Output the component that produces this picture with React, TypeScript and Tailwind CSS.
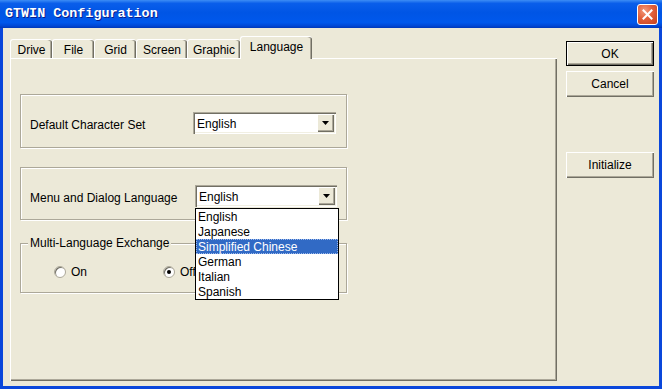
import { useState } from "react";

const raised =
  "shadow-[inset_1px_1px_0_#fff,inset_-1px_-1px_0_#716f64,inset_-2px_-2px_0_#aca899]";
const etched =
  "border border-[#aca899] shadow-[inset_1px_1px_0_#fff,1px_1px_0_#fff]";

const tabs = [
  { name: "Drive", w: "w-[42px]" },
  { name: "File", w: "w-[42px]" },
  { name: "Grid", w: "w-[42px]" },
  { name: "Screen", w: "w-[51px]" },
  { name: "Graphic", w: "w-[53px]" },
  { name: "Language", w: "w-[72px]" },
];

const languages = [
  "English",
  "Japanese",
  "Simplified Chinese",
  "German",
  "Italian",
  "Spanish",
];

const Combo = ({ value, width }: { value: string; width: string }) => (
  <div
    className={`flex h-[22px] bg-white p-[2px] shadow-[inset_1px_1px_0_#aca899,inset_2px_2px_0_#716f64,inset_-1px_-1px_0_#fff,inset_-2px_-2px_0_#f1efe2] ${width}`}
  >
    <span className="flex-1 pl-[2px] pt-[1px] leading-[18px] text-black">{value}</span>
    <span
      className={`flex h-[18px] w-[17px] items-center justify-center bg-[#ECE9D8] ${raised}`}
    >
      <svg width="7" height="4" viewBox="0 0 7 4">
        <path d="M0 0h7L3.5 4z" fill="#000" />
      </svg>
    </span>
  </div>
);

const Radio = ({ label, checked }: { label: string; checked?: boolean }) => (
  <div className="flex items-center gap-[5px]">
    <span className="flex h-[12px] w-[12px] items-center justify-center rounded-full border border-[#aca899] bg-white shadow-[inset_1px_1px_0_#716f64]">
      {checked && <span className="h-[4px] w-[4px] rounded-full bg-black" />}
    </span>
    <span className="leading-[14px]">{label}</span>
  </div>
);

const XpButton = ({
  label,
  isDefault,
  className,
}: {
  label: string;
  isDefault?: boolean;
  className: string;
}) => (
  <button
    type="button"
    className={`flex w-[88px] items-center justify-center bg-[#ECE9D8] text-[12px] text-black ${
      isDefault ? "border border-black" : ""
    } ${className}`}
  >
    <span className={`flex h-full w-full items-center justify-center ${raised}`}>
      {label}
    </span>
  </button>
);

const App = () => {
  const [active] = useState("Language");

  return (
    <div className="flex h-[389px] w-[662px] flex-col bg-[#0A47DB] font-['Liberation_Sans',Arial,sans-serif] text-[12px] text-black">
      {/* title bar */}
      <div className="flex h-[28px] shrink-0 items-center bg-[linear-gradient(180deg,#3D8DF5_0%,#0A5EEA_12%,#0055E5_45%,#0058EC_80%,#0048D6_92%,#0037B8_100%)] pl-[5px] pr-[4px]">
        <span className="font-['Liberation_Mono',monospace] text-[13.4px] font-bold text-white [text-shadow:1px_1px_0_#0A1E8C]">
          GTWIN Configuration
        </span>
        <button
          type="button"
          className="ml-auto flex h-[21px] w-[21px] items-center justify-center rounded-[3px] border border-white bg-[radial-gradient(circle_at_35%_30%,#F29A7C_0%,#E2603B_45%,#C4401C_100%)]"
        >
          <svg width="11" height="11" viewBox="0 0 11 11">
            <path
              d="M1.5 1.5l8 8M9.5 1.5l-8 8"
              stroke="#fff"
              strokeWidth="2"
              strokeLinecap="square"
            />
          </svg>
        </button>
      </div>

      {/* body */}
      <div className="mx-[3px] mb-[3px] flex flex-1 bg-[#ECE9D8] pb-[5px] pl-[7px] pr-[5px] pt-[8px]">
        <div className="flex w-[547px] flex-col">
          <div className="flex h-[22px] items-end">
            {tabs.map((t) =>
              t.name === active ? (
                <div
                  key={t.name}
                  className={`relative z-10 -mb-px flex h-[23px] items-center justify-center rounded-t-[3px] border-l border-t border-white bg-[#ECE9D8] pb-[3px] shadow-[inset_-1px_0_0_#716f64,inset_-2px_0_0_#aca899] ${t.w}`}
                >
                  {t.name}
                </div>
              ) : (
                <div
                  key={t.name}
                  className={`flex h-[19px] items-center justify-center rounded-t-[3px] border-l border-t border-white pt-[1px] shadow-[inset_-1px_0_0_#716f64,inset_-2px_0_0_#aca899] ${t.w}`}
                >
                  {t.name}
                </div>
              )
            )}
          </div>

          <div className="flex flex-1 flex-col border-l border-t border-white pl-[9px] pt-[35px] shadow-[inset_-1px_-1px_0_#716f64,inset_-2px_-2px_0_#aca899]">
            <div className={`flex h-[54px] w-[327px] items-center pl-[9px] pt-[4px] ${etched}`}>
              <span className="w-[163px] pt-[3px]">Default Character Set</span>
              <Combo value="English" width="w-[143px]" />
            </div>

            <div className={`mt-[19px] flex h-[53px] w-[327px] items-center pl-[9px] pt-[5px] ${etched}`}>
              <span className="w-[165px] pt-[3px]">Menu and Dialog Language</span>
              <div className="relative">
                <Combo value="English" width="w-[142px]" />
                <ul className="absolute left-0 top-[23px] z-20 w-[144px] border border-black bg-white">
                  {languages.map((l) => (
                    <li
                      key={l}
                      className={`h-[15px] pl-[2px] pt-[1px] leading-[15px] ${
                        l === "Simplified Chinese"
                          ? "bg-[#316AC5] text-white outline outline-1 -outline-offset-1 outline-dotted outline-[#9DB9EB]"
                          : ""
                      }`}
                    >
                      {l}
                    </li>
                  ))}
                </ul>
              </div>
            </div>

            <fieldset className={`mt-[16px] w-[327px] pb-[13px] ${etched}`}>
              <legend className="ml-[7px] bg-[#ECE9D8] px-[2px] leading-[14px]">
                Multi-Language Exchange
              </legend>
              <div className="flex pl-[33px] pt-[15px]">
                <div className="w-[109px]">
                  <Radio label="On" />
                </div>
                <Radio label="Off" checked />
              </div>
            </fieldset>
          </div>
        </div>

        <div className="ml-[9px] flex w-[88px] flex-col pt-[5px]">
          <XpButton label="OK" isDefault className="h-[25px]" />
          <XpButton label="Cancel" className="mt-[5px] h-[26px]" />
          <XpButton label="Initialize" className="mt-[55px] h-[26px]" />
        </div>
      </div>
    </div>
  );
};

export default App;
